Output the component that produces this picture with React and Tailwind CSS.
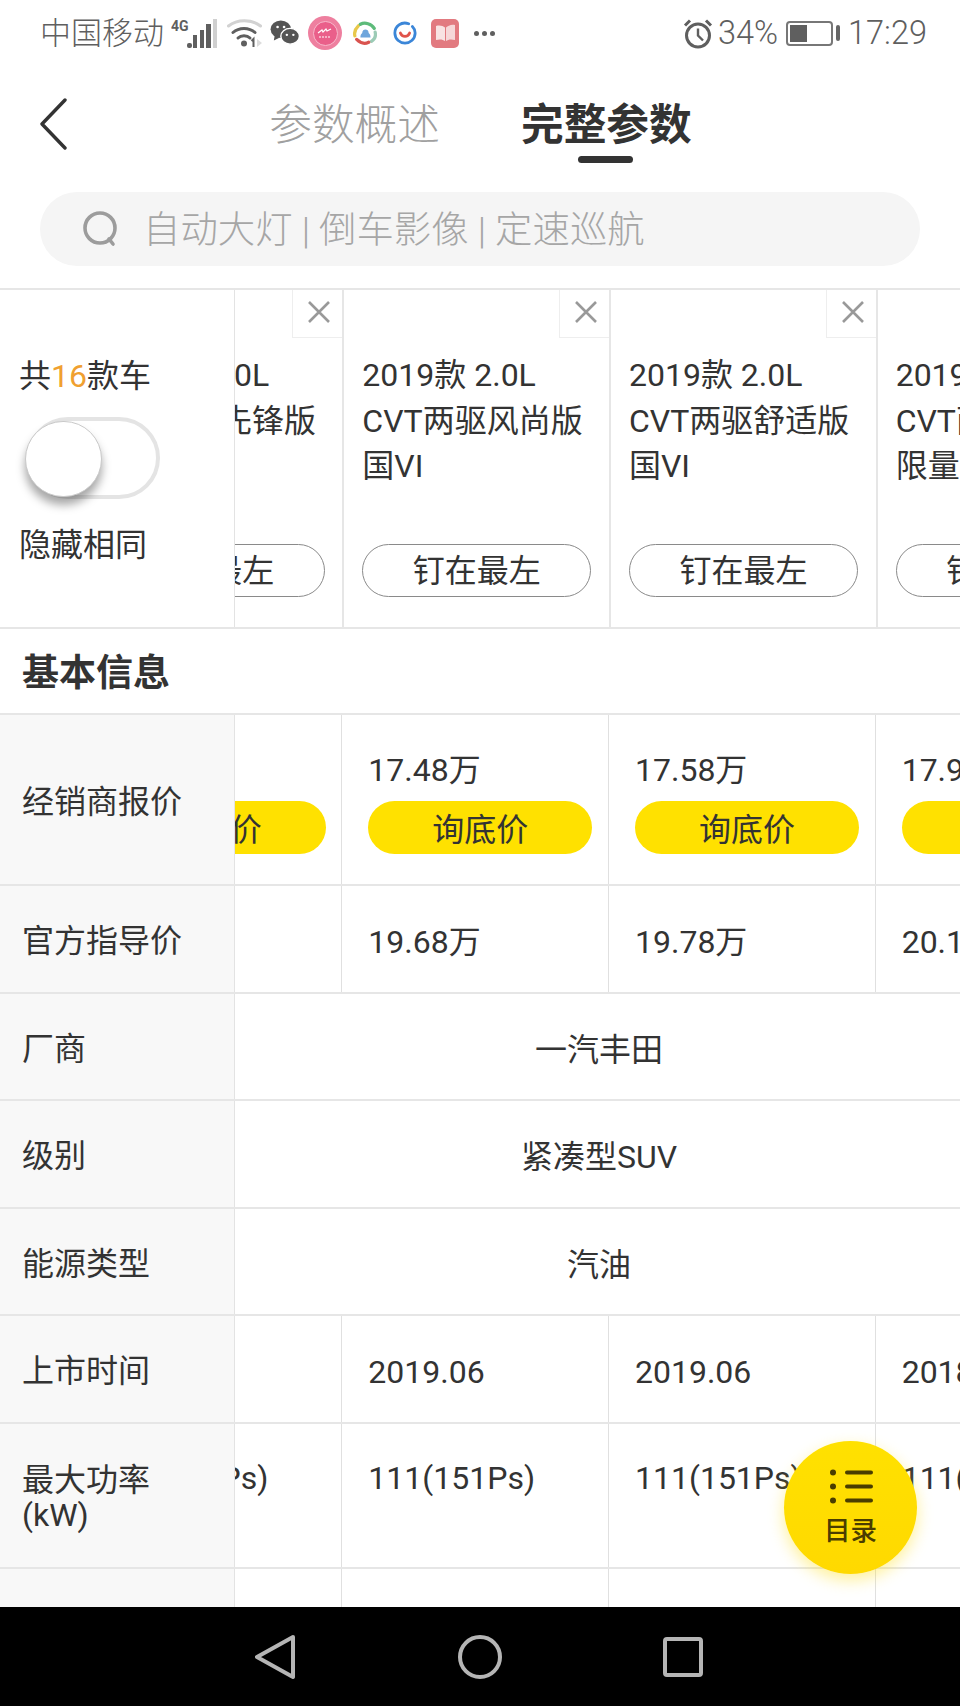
import React from "react";

const FONT = "font-['Roboto','Noto_Sans_CJK_SC',sans-serif]";

function Reel({ children, head }) {
  return (
    <div className="flex-1 min-w-0 overflow-hidden">
      <div className={`flex ${head ? "-ml-[157.33px]" : "-ml-[159.33px]"} w-[1200px] h-full`}>{children}</div>
    </div>
  );
}

function Label({ children }) {
  return (
    <div className="w-[235px] shrink-0 bg-[#f8f8f8] border-r border-[#e3e3e3] pl-[22px] pt-[5px] flex items-center text-[32px] leading-[35px] text-[#333]">
      <div>{children}</div>
    </div>
  );
}

function Row({ h, label, cells, merged, top }) {
  return (
    <div className={`flex border-b-2 border-[#e6e6e6] ${h}`}>
      <Label>{label}</Label>
      {merged ? (
        <div className="flex-1 pt-[6px] pl-[3px] flex items-center justify-center text-[32px] text-[#333]">{merged}</div>
      ) : (
        <Reel>
          {cells.map((c, i) => (
            <div key={i} className={`w-[266.67px] shrink-0 border-r border-[#e0e0e0] pl-[26px] flex text-[32px] whitespace-nowrap text-[#333] ${top ? "items-start pt-[34px] leading-[40px]" : "items-center pt-[6px]"}`}>
              {c}
            </div>
          ))}
        </Reel>
      )}
    </div>
  );
}

function PriceCell({ price }) {
  return (
    <div className="w-[266.67px] shrink-0 border-r border-[#e0e0e0] pl-[26px] pt-[35px] text-[#333]">
      <div className="text-[32px] leading-[40px] whitespace-nowrap">{price}</div>
      <div className="mt-[11px] pt-[4px] w-[224px] h-[53px] rounded-full bg-[#ffe100] flex items-center justify-center text-[32px]">询底价</div>
    </div>
  );
}

function CarHead({ lines }) {
  return (
    <div className="w-[266.67px] shrink-0 border-r-2 border-[#e6e6e6] relative pl-[18px] pt-[63px] text-[#333]">
      <div className="absolute top-0 right-0 w-[50px] h-[48px] border-l border-b border-[#eeeeee] pl-[3px] pb-[3px] flex items-center justify-center">
        <svg width="22" height="22" viewBox="0 0 22 22" fill="none" stroke="#999999" strokeWidth="2.6"><path d="M1 1L21 21M21 1L1 21" /></svg>
      </div>
      <div className="text-[32px] leading-[45.6px] h-[182px] whitespace-nowrap">
        {lines.map((l) => <div key={l}>{l}</div>)}
      </div>
      <div className="mt-[9px] pt-[1px] w-[229px] h-[53px] rounded-full border border-[#8a8a8a] flex items-center justify-center text-[32px]">钉在最左</div>
    </div>
  );
}

function Cell4G() {
  return (
    <svg width="47" height="29" viewBox="0 0 47 29" className="shrink-0">
      <text x="0" y="12" fontSize="14" fontWeight="700" fill="#5f5f5f" fontFamily="Roboto">4G</text>
      <rect x="16" y="24" width="5" height="5" rx="2" fill="#5f5f5f" />
      <rect x="22" y="16" width="4" height="13" fill="#5f5f5f" />
      <rect x="29" y="11" width="4" height="18" fill="#5f5f5f" />
      <rect x="35" y="5" width="5" height="24" fill="#5f5f5f" />
      <rect x="42" y="0" width="4" height="29" fill="#d0d0d0" />
    </svg>
  );
}

function Wifi() {
  return (
    <svg width="35" height="28" viewBox="0 0 35 28" fill="none" className="shrink-0">
      <path d="M1.500 7C10 0 25 0 33.500 7" stroke="#d2d2d2" strokeWidth="3" strokeLinecap="round" />
      <path d="M6 13.500C12 8 22 8 28 13.500" stroke="#5f5f5f" strokeWidth="3" strokeLinecap="round" />
      <path d="M11 19C14 16 20 16 23 19" stroke="#5f5f5f" strokeWidth="3" strokeLinecap="round" />
      <circle cx="17" cy="24.500" r="3" fill="#5f5f5f" />
      <path d="M26.500 28V20l-2 2" stroke="#5f5f5f" strokeWidth="2" />
      <path d="M30 20l5 4-5 4z" fill="#dddddd" />
    </svg>
  );
}

function WeChat() {
  return (
    <svg width="30" height="26" viewBox="0 0 32 28" className="shrink-0">
      <ellipse cx="11.500" cy="10" rx="11" ry="9.500" fill="#555555" />
      <path d="M5 16l-1 6 6-3z" fill="#555555" />
      <ellipse cx="21.500" cy="17.500" rx="10" ry="8.500" fill="#555555" stroke="#ffffff" strokeWidth="1.500" />
      <circle cx="8" cy="7.500" r="1.400" fill="#ffffff" />
      <circle cx="15" cy="7.500" r="1.400" fill="#ffffff" />
      <circle cx="18" cy="16" r="1.300" fill="#ffffff" />
      <circle cx="25" cy="16" r="1.300" fill="#ffffff" />
    </svg>
  );
}

function PinkBadge() {
  return (
    <div className="w-[34px] h-[34px] shrink-0 rounded-full bg-[#ee7f9f] flex items-center justify-center">
      <div className="w-[25px] h-[25px] rounded-full bg-[#ea5f8a] border border-[#f7b9cc] flex items-center justify-center">
        <svg width="18" height="13" viewBox="0 0 18 13" fill="none" stroke="#ffffff" strokeWidth="1.200"><path d="M2 6l4-3 1 2 3-3 1 2 4-2" /><path d="M3 10h12" strokeDasharray="2 1" /></svg>
      </div>
    </div>
  );
}

function Tencent() {
  return (
    <svg width="24" height="24" viewBox="0 0 26 26" fill="none" className="shrink-0">
      <path d="M6 5C3 8 1 12 2 16" stroke="#e8c84a" strokeWidth="3.500" strokeLinecap="round" />
      <path d="M8 3.500C13 1 20 3 23 8" stroke="#5dbb7a" strokeWidth="3.500" strokeLinecap="round" />
      <path d="M24 12c1 4-1 8-4 10" stroke="#9ccbb6" strokeWidth="3.500" strokeLinecap="round" />
      <path d="M4 20c4 4 9 5 13 3" stroke="#d9534f" strokeWidth="3.500" strokeLinecap="round" />
      <path d="M8 18c0-3 1-4 2-5 0-5 7-5 7 0 1 1 2 2 2 5z" fill="#6ea6dc" />
    </svg>
  );
}

function BlueRing() {
  return (
    <svg width="24" height="24" viewBox="0 0 26 26" fill="none" className="shrink-0">
      <path d="M17 3C9 0 2 6 2 13s6 11 11 11 11-4 11-11c0-3-1-5-3-7" stroke="#3b86d8" strokeWidth="3" strokeLinecap="round" />
      <path d="M8 13c2 5 8 5 10 0" stroke="#e0534a" strokeWidth="3" strokeLinecap="round" />
    </svg>
  );
}

function Book() {
  return (
    <div className="w-[28px] h-[29px] shrink-0 rounded-[5px] bg-[#e27a80] flex items-center justify-center">
      <svg width="21" height="18" viewBox="0 0 21 18"><path d="M1 2c4-1 7 0 9 1.500V17c-2-1.500-5-2-9-1z" fill="#f8e3e3" /><path d="M20 1c-4-1-7 1-9 2.500V17c2-1.500 5-2 9-1z" fill="#f6d7d8" /></svg>
    </div>
  );
}

function StatusBar() {
  return (
    <div className="h-[66px] flex items-center justify-between pl-[40px] pr-[33px] text-[#5f5f5f]">
      <div className="flex items-center">
        <span className="text-[31px] font-light leading-none">中国移动</span>
        <div className="ml-[7px]"><Cell4G /></div>
        <div className="ml-[9px]"><Wifi /></div>
        <div className="ml-[8px]"><WeChat /></div>
        <div className="ml-[8px]"><PinkBadge /></div>
        <div className="ml-[11px]"><Tencent /></div>
        <div className="ml-[16px]"><BlueRing /></div>
        <div className="ml-[14px]"><Book /></div>
        <div className="ml-[15px] flex gap-[3px]">
          <i className="w-[5px] h-[5px] rounded-full bg-[#5f5f5f]" />
          <i className="w-[5px] h-[5px] rounded-full bg-[#5f5f5f]" />
          <i className="w-[5px] h-[5px] rounded-full bg-[#5f5f5f]" />
        </div>
      </div>
      <div className="flex items-center">
        <svg width="30" height="31" viewBox="0 0 30 30" fill="none" stroke="#5f5f5f" strokeWidth="3" className="shrink-0">
          <circle cx="15" cy="17" r="11.500" />
          <path d="M15 10v7l5 5" strokeWidth="2.400" />
          <path d="M2 7l5-5M28 7l-5-5" strokeWidth="3" />
        </svg>
        <span className="ml-[5px] text-[32.5px] leading-none font-light">34%</span>
        <div className="ml-[8px] w-[47px] h-[25px] rounded-[4px] border-2 border-[#777777] p-[2px] flex">
          <div className="w-[17px] bg-[#5f5f5f]" />
        </div>
        <div className="ml-[3px] w-[4px] h-[16px] rounded-full bg-[#666666]" />
        <span className="ml-[8px] text-[32.5px] leading-none font-light">17:29</span>
      </div>
    </div>
  );
}

function Header() {
  return (
    <div className="relative h-[110px] flex justify-center text-[42.7px]">
      <div className="absolute left-[38px] top-[32px]">
        <svg width="32" height="52" viewBox="0 0 32 52" fill="none" stroke="#333333" strokeWidth="3.400" strokeLinecap="round" strokeLinejoin="round"><path d="M27 2L4 26l23 24" /></svg>
      </div>
      <div className="ml-[1px] flex gap-[81px] pt-[36px] leading-[46px]">
        <div className="text-[#a0a0a0] font-light">参数概述</div>
        <div className="relative font-bold text-[#333333]">
          完整参数
          <div className="absolute left-[57px] top-[54px] w-[55px] h-[7px] rounded-full bg-[#333333]" />
        </div>
      </div>
    </div>
  );
}

function Search() {
  return (
    <div className="h-[112px] px-[40px] pt-[16px]">
      <div className="h-[74px] w-[880px] rounded-full bg-[#f5f5f5] flex items-center pl-[41px]">
        <svg width="38" height="38" viewBox="0 0 38 38" fill="none" stroke="#9c9c9c" strokeWidth="3.600" strokeLinecap="round"><circle cx="19" cy="18" r="15" /><path d="M28 29l4 5" /></svg>
        <span className="ml-[24px] pt-[3px] text-[37.4px] font-light leading-none text-[#a6a6a6]">自动大灯 | 倒车影像 | 定速巡航</span>
      </div>
    </div>
  );
}

const cars = [
  ["2019款 2.0L", "CVT两驱先锋版"],
  ["2019款 2.0L", "CVT两驱风尚版", "国VI"],
  ["2019款 2.0L", "CVT两驱舒适版", "国VI"],
  ["2019款 2.0L", "CVT两驱精英版", "限量版"],
];

export default function App() {
  return (
    <div className={`${FONT} relative w-[960px] h-[1706px] overflow-hidden bg-white flex flex-col`}>
      <StatusBar />
      <Header />
      <Search />

      <div className="flex-1 min-h-0 flex flex-col border-t-2 border-[#e6e6e6]">
        <div className="h-[339px] shrink-0 flex border-b-2 border-[#e6e6e6]">
          <div className="w-[235px] shrink-0 border-r border-[#e3e3e3] pl-[19px] pt-[66px] text-[32px] text-[#333333]">
            <div className="leading-[40px]">共<span className="text-[#f0a030]">16</span>款车</div>
            <div className="relative mt-[21px] ml-[6px] w-[135px] h-[82px]">
              <div className="absolute left-[2px] top-0 w-[133px] h-[82px] rounded-full border-[4px] border-[#e4e4e4]" />
              <div className="absolute left-0 top-[4px] w-[77px] h-[76px] rounded-full bg-white border border-[#c9c9c9] shadow-[0_8px_10px_rgba(0,0,0,0.35)]" />
            </div>
            <div className="mt-[26px] leading-[40px]">隐藏相同</div>
          </div>
          <Reel head>
            {cars.map((c) => <CarHead key={c[1]} lines={c} />)}
          </Reel>
        </div>

        <div className="h-[86px] shrink-0 pl-[22px] pt-[6px] flex items-center border-b-2 border-[#e6e6e6] text-[37px] font-bold text-[#333333]">基本信息</div>

        <div className="h-[171px] shrink-0 flex border-b-2 border-[#e6e6e6]">
          <Label>经销商报价</Label>
          <Reel>
            {["17.38万", "17.48万", "17.58万", "17.98万"].map((p) => <PriceCell key={p} price={p} />)}
          </Reel>
        </div>
        <Row h="h-[108px]" label="官方指导价" cells={["19.58万", "19.68万", "19.78万", "20.18万"]} />
        <Row h="h-[107px]" label="厂商" merged="一汽丰田" />
        <Row h="h-[108px]" label="级别" merged="紧凑型SUV" />
        <Row h="h-[107px]" label="能源类型" merged="汽油" />
        <Row h="h-[108px]" label="上市时间" cells={["2019.06", "2019.06", "2019.06", "2018.12"]} />
        <Row h="h-[145px]" top label={<>最大功率<br />(kW)</>} cells={["111(151Ps)", "111(151Ps)", "111(151Ps)", "111(151Ps)"]} />
        <div className="flex-1 flex">
          <div className="w-[235px] shrink-0 bg-[#f8f8f8] border-r border-[#e3e3e3]" />
          <Reel>
            {[0, 1, 2, 3].map((i) => <div key={i} className="w-[266.67px] shrink-0 border-r border-[#e0e0e0]" />)}
          </Reel>
        </div>
      </div>

      <div className="h-[99px] shrink-0 bg-black flex items-center pl-[255px]">
        <svg width="40" height="46" viewBox="0 0 40 46" fill="none" stroke="#b5b5b5" strokeWidth="4" strokeLinejoin="round"><path d="M38 3L2 23l36 20z" /></svg>
        <svg className="ml-[163px]" width="44" height="44" viewBox="0 0 44 44" fill="none" stroke="#b5b5b5" strokeWidth="4"><circle cx="22" cy="22" r="20" /></svg>
        <svg className="ml-[161px]" width="40" height="40" viewBox="0 0 40 40" fill="none" stroke="#b5b5b5" strokeWidth="4" strokeLinejoin="round"><rect x="2" y="2" width="36" height="36" rx="2" /></svg>
      </div>

      <div className="absolute left-[784px] top-[1441px] w-[133px] h-[133px] rounded-full bg-gradient-to-b from-[#ffe100] to-[#ffd900] shadow-[0_6px_16px_rgba(255,221,0,0.4)] flex flex-col items-center pt-[28px] text-[#4a3d00]">
        <svg width="44" height="35" viewBox="0 0 44 34" fill="#4a3d00">
          <circle cx="4" cy="3" r="3" /><circle cx="4" cy="17" r="3" /><circle cx="4" cy="31" r="3" />
          <rect x="16" y="1" width="28" height="4" rx="2" /><rect x="16" y="15" width="28" height="4" rx="2" /><rect x="16" y="29" width="28" height="4" rx="2" />
        </svg>
        <div className="mt-[12px] text-[26.5px] leading-[30px] font-medium">目录</div>
      </div>
    </div>
  );
}
